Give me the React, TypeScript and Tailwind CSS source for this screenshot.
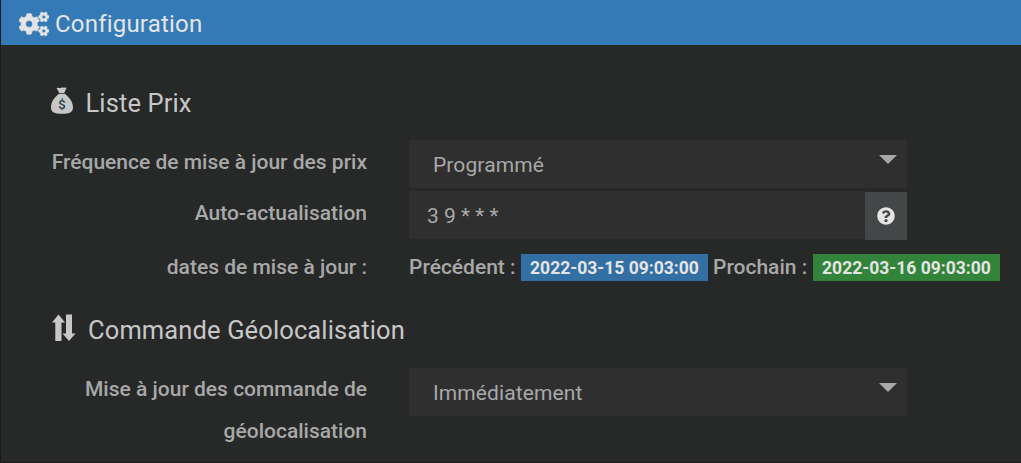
import type { ReactNode } from 'react';
import { FaCogs, FaQuestionCircle } from 'react-icons/fa';

function MoneyBag() {
  return (
    <svg width="24" height="28" viewBox="0 0 24 28" className="shrink-0">
      <path
        fill="#c7c7c7"
        d="M6.500 .9C8 .3 9.300 1.100 10.500 .9C11.800 .6 12.500 .3 13.700 .7C14.900 1.100 15.300 .2 16.500 .9L14.200 6H9.300ZM9 6.800H14.700C19 10 23 14.700 23 20.200C23 25.200 19.500 26.800 12 26.800S1 25.200 1 20.200C1 14.700 4.800 10 9 6.800Z"
      />
      <text x="12" y="21.500" textAnchor="middle" fontSize="13" fontWeight="500" fill="#264050" className="font-['Roboto',sans-serif]">
        $
      </text>
    </svg>
  );
}

function UpDownArrows() {
  return (
    <svg width="24" height="28" viewBox="0 0 24 28" className="shrink-0">
      <path fill="#c7c7c7" d="M6.500 .6L13 8.500H9.500V27H3.300V8.500H0ZM14 .6H20V19.500H23.500L17 27L10.500 19.500H14Z" />
    </svg>
  );
}

function Heading({ icon, children }: { icon: ReactNode; children: ReactNode }) {
  return (
    <h2 className="flex h-9 items-center pl-[50px] text-[25.500px] tracking-[0.12px] text-[#c7c7c7]">
      {icon}
      {children}
    </h2>
  );
}

function Label({ children }: { children: ReactNode }) {
  return <div className="w-[367px] shrink-0 pl-10 text-right font-medium leading-[42px]">{children}</div>;
}

function Select({ value }: { value: string }) {
  return (
    <div className="ml-[42px] flex h-12 w-[498px] justify-between bg-[#2f2f2f] pl-6 pr-2.5 leading-[50px]">
      <span className="tracking-[0.1px]">{value}</span>
      <svg width="18" height="9" viewBox="0 0 18 9" className="mt-[15px]">
        <path d="M0 0H18L9 9Z" fill="#a8a8a8" />
      </svg>
    </div>
  );
}

function Badge({ className, children }: { className: string; children: ReactNode }) {
  return <span className={`flex h-[27px] w-[187px] items-center justify-center pt-px text-[17.550px] font-bold text-[#e4e4e4] ${className}`}>{children}</span>;
}

export default function App() {
  return (
    <main className="h-[463px] w-[1021px] overflow-hidden border-b border-l border-[#1b1b1b] bg-[#272928] font-['Roboto',sans-serif] text-[21px] text-[#a8a8a8]">
      <div className="-ml-px">
        <header className="ml-px flex h-[45px] items-center bg-[#347ab7] pl-[18px] pt-0.5 text-2xl text-[#e4e4e4]">
          <FaCogs size={30} strokeWidth={10} className="mr-1.5" />
          <h1 className="tracking-[0.2px]">Configuration</h1>
        </header>

        <section className="pt-10">
          <Heading icon={<span className="mb-1 mr-[11.500px]"><MoneyBag /></span>}>Liste Prix</Heading>
          <div className="mt-[19px] flex h-[51px]">
            <div className="pt-px"><Label>Fréquence de mise à jour des prix</Label></div>
            <Select value="Programmé" />
          </div>
          <div className="flex h-[55px]">
            <div className="pt-px"><Label>Auto-actualisation</Label></div>
            <div className="ml-[42px] h-12 w-[456px] bg-[#2f2f2f] pl-[18px] leading-[50px]">3 9 * * *</div>
            <div className="mt-px flex h-12 w-[42px] items-center justify-center bg-[#454648]">
              <FaQuestionCircle size={18} className="text-[#e4e4e4]" />
            </div>
          </div>
          <div className="flex h-[42px] whitespace-nowrap font-medium leading-[42px]">
            <Label>dates de mise à jour :</Label>
            <div className="ml-[42px] flex items-center">
              <span className="w-28">Précédent :</span>
              <Badge className="bg-[#326fa3]">2022-03-15 09:03:00</Badge>
              <span className="w-[105px] pl-[5px]">Prochain :</span>
              <Badge className="bg-[#33843b]">2022-03-16 09:03:00</Badge>
            </div>
          </div>
        </section>

        <section className="pt-6">
          <Heading icon={<span className="mb-1 ml-0.5 mr-3"><UpDownArrows /></span>}>Commande Géolocalisation</Heading>
          <div className="mt-5 flex">
            <Label>Mise à jour des commande de géolocalisation</Label>
            <Select value="Immédiatement" />
          </div>
        </section>
      </div>
    </main>
  );
}
